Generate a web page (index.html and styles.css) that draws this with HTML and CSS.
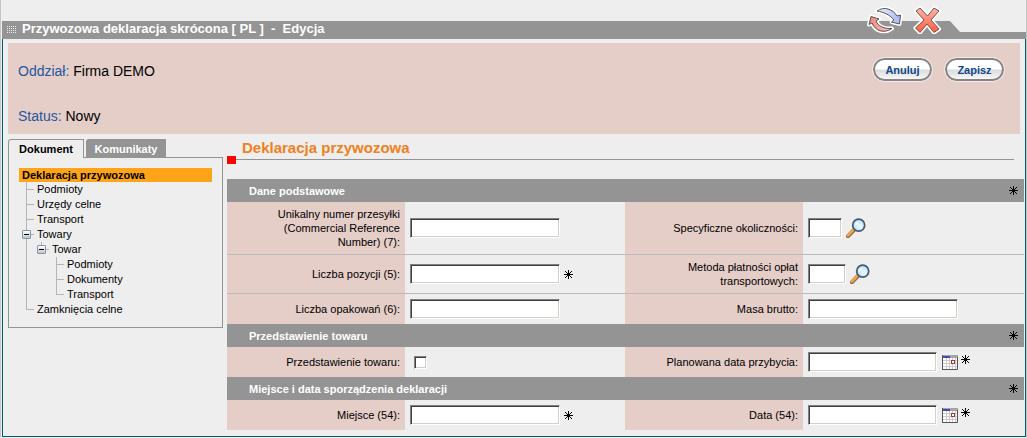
FILE: index.html
```html
<!DOCTYPE html>
<html lang="pl">
<head>
<meta charset="utf-8">
<title>Przywozowa deklaracja skrócona</title>
<link rel="stylesheet" href="styles.css">
</head>
<body>
<svg class="defs" width="0" height="0" aria-hidden="true">
  <symbol id="star" viewBox="0 0 9 9"><path d="M4.5 0v9M0 4.5h9M1 1l7 7M8 1l-7 7" stroke="#000" stroke-width="1" fill="none"/><rect x="3" y="3" width="3" height="3"/></symbol>
  <symbol id="lens" viewBox="0 0 20 20"><path d="M2 18.2 8 12" stroke="#8b6a4a" stroke-width="4" stroke-linecap="round"/><path d="M1.8 17.6 7.4 11.8" stroke="#f7a640" stroke-width="2.4" stroke-linecap="round"/><circle cx="12.7" cy="7.2" r="6" fill="#c4e8fb" stroke="#46586c" stroke-width="1.7"/><path d="M9 8a4 4 0 0 1 4-4.300c-1 1.500-2 3.500-4 4.300z" fill="#fff"/><circle cx="14" cy="8.500" r="3" fill="#e2f5ff"/></symbol>
  <symbol id="cal" viewBox="0 0 16 15"><rect width="16" height="15" fill="#fff"/><path d="M.5 3v12M4.500 3v12M7.500 3v12M10.500 3v12M13.500 3v12M0 5.500h16M0 8.500h16M0 11.500h16" stroke="#ccc" fill="none"/><path d="M0 0h16v3H0z" fill="#a5a5a5"/><path d="M1 1h7v2H1z" fill="#4848b0"/><path d="M0 14.500h15.500V2M.5 0v15" stroke="#555" fill="none"/><rect x="9.500" y="5.500" width="3" height="3" fill="#fff" stroke="#a33"/></symbol>
</svg>
<div class="window">
  <header class="titlebar">
    <div class="titlebar-main">
      <h1 class="title"><span class="grip"></span>Przywozowa deklaracja skrócona [ PL ] &nbsp;-&nbsp; Edycja</h1>
      <button class="icon-btn" type="button" aria-label="Odśwież">
        <svg width="36" height="30" viewBox="0 0 36 30">
          <defs>
            <linearGradient id="blue"><stop offset="0" stop-color="#f2f4ff"/><stop offset="1" stop-color="#a9b6f2"/></linearGradient>
            <linearGradient id="red" x1="0" y1="0" x2="1" y2="0"><stop offset="0" stop-color="#f4857e"/><stop offset="1" stop-color="#fbc4c0"/></linearGradient>
          </defs>
          <g stroke="#fff" stroke-width="4" stroke-linejoin="round" fill="#fff"><path d="M10 6C17 1 26 4 30 11l3.500-1-1 9-8-2 2.500-2C23 10 17 7 10 6z"/><path d="M4 11.500l8 2.500-3 2c2 5 8 8 16 7.500C17 29 8 26 5 18l-3 1.500z"/></g>
          <path d="M10 6C17 1 26 4 30 11l3.500-1-1 9-8-2 2.500-2C23 10 17 7 10 6z" fill="url(#blue)" stroke="#555" stroke-width="1"/>
          <path d="M4 11.500l8 2.500-3 2c2 5 8 8 16 7.500C17 29 8 26 5 18l-3 1.500z" fill="url(#red)" stroke="#555" stroke-width="1"/>
        </svg>
      </button>
      <button class="icon-btn" type="button" aria-label="Zamknij">
        <svg width="29" height="28" viewBox="0 0 29 28">
          <defs><linearGradient id="cross" x1="0" y1="0" x2="0" y2="1"><stop offset="0" stop-color="#f9b6a8"/><stop offset="1" stop-color="#ff5a40"/></linearGradient></defs>
          <path d="M3 5l4-3 7.500 8L21 2l5 3-8 9 8 9-5 3.500-7-8.500-7 8.500L2.500 22 11 14z" fill="#fff" stroke="#fff" stroke-width="4" stroke-linejoin="round"/>
          <path d="M3 5l4-3 7.500 8L21 2l5 3-8 9 8 9-5 3.500-7-8.500-7 8.500L2.500 22 11 14z" fill="url(#cross)" stroke="#75504a" stroke-width="1"/>
        </svg>
      </button>
    </div>
    <div class="titlebar-end"></div>
  </header>
  <div class="frame">
    <section class="summary">
      <div class="facts">
        <p class="fact"><span class="fact-name">Oddział:</span> Firma DEMO</p>
        <p class="fact"><span class="fact-name">Status:</span> Nowy</p>
      </div>
      <div class="actions">
        <button class="pill" type="button">Anuluj</button>
        <button class="pill" type="button">Zapisz</button>
      </div>
    </section>
    <div class="columns">
      <nav class="side">
        <div class="tabs">
          <button class="tab tab-on" type="button">Dokument</button>
          <button class="tab" type="button">Komunikaty</button>
        </div>
        <div class="tree-box">
          <a class="root" href="#">Deklaracja przywozowa</a>
          <ul class="tree">
            <li><a href="#">Podmioty</a></li>
            <li><a href="#">Urzędy celne</a></li>
            <li><a href="#">Transport</a></li>
            <li><button class="toggle" type="button" aria-label="Zwiń"></button><a href="#">Towary</a>
              <ul class="tree">
                <li><button class="toggle" type="button" aria-label="Zwiń"></button><a href="#">Towar</a>
                  <ul class="tree">
                    <li><a href="#">Podmioty</a></li>
                    <li><a href="#">Dokumenty</a></li>
                    <li><a href="#">Transport</a></li>
                  </ul>
                </li>
              </ul>
            </li>
            <li><a href="#">Zamknięcia celne</a></li>
          </ul>
        </div>
      </nav>
      <main class="main">
        <div class="heading"><h2>Deklaracja przywozowa</h2><div class="rule"></div></div>
        <form>
          <div class="band"><h3>Dane podstawowe</h3><svg class="star"><use href="#star"/></svg></div>
          <div class="row row-tall">
            <label class="name" for="f1"><span>Unikalny numer przesyłki (Commercial Reference Number) (7):</span></label>
            <div class="value"><input class="box" id="f1" type="text"></div>
            <label class="name" for="f2"><span>Specyficzne okoliczności:</span></label>
            <div class="value"><input class="box box-xs" id="f2" type="text"><button class="icon-btn" type="button" aria-label="Szukaj"><svg class="lens"><use href="#lens"/></svg></button></div>
          </div>
          <div class="row row-mid">
            <label class="name" for="f3"><span>Liczba pozycji (5):</span></label>
            <div class="value"><input class="box" id="f3" type="text"><svg class="star"><use href="#star"/></svg></div>
            <label class="name" for="f4"><span>Metoda płatności opłat transportowych:</span></label>
            <div class="value"><input class="box box-s" id="f4" type="text"><button class="icon-btn" type="button" aria-label="Szukaj"><svg class="lens"><use href="#lens"/></svg></button></div>
          </div>
          <div class="row">
            <label class="name" for="f5"><span>Liczba opakowań (6):</span></label>
            <div class="value"><input class="box" id="f5" type="text"></div>
            <label class="name" for="f6"><span>Masa brutto:</span></label>
            <div class="value"><input class="box" id="f6" type="text"></div>
          </div>
          <div class="band"><h3>Przedstawienie towaru</h3><svg class="star"><use href="#star"/></svg></div>
          <div class="row">
            <label class="name" for="f7"><span>Przedstawienie towaru:</span></label>
            <div class="value"><input class="check" id="f7" type="checkbox"></div>
            <label class="name" for="f8"><span>Planowana data przybycia:</span></label>
            <div class="value"><input class="box box-date" id="f8" type="text"><span class="date-tools"><button class="icon-btn" type="button" aria-label="Kalendarz"><svg class="cal"><use href="#cal"/></svg></button><svg class="star"><use href="#star"/></svg></span></div>
          </div>
          <div class="band"><h3>Miejsce i data sporządzenia deklaracji</h3><svg class="star"><use href="#star"/></svg></div>
          <div class="row">
            <label class="name" for="f9"><span>Miejsce (54):</span></label>
            <div class="value"><input class="box" id="f9" type="text"><svg class="star"><use href="#star"/></svg></div>
            <label class="name" for="f10"><span>Data (54):</span></label>
            <div class="value"><input class="box box-date" id="f10" type="text"><span class="date-tools"><button class="icon-btn" type="button" aria-label="Kalendarz"><svg class="cal"><use href="#cal"/></svg></button><svg class="star"><use href="#star"/></svg></span></div>
          </div>
        </form>
      </main>
    </div>
  </div>
</div>
</body>
</html>
```

FILE: styles.css
```css
* { box-sizing: border-box; }
body {
  margin: 0;
  background: #eee;
  color: #000;
  font: 11px/14px "Liberation Sans", Arial, sans-serif;
}
h1, h2, h3, p, ul { margin: 0; padding: 0; }
ul { list-style: none; }
a { color: inherit; text-decoration: none; }
svg { display: block; }
.defs { position: absolute; }
.window { border-left: 1px solid #c6c6c6; border-right: 1px solid #c6c6c6; padding-left: 1px; }

.titlebar { display: flex; align-items: flex-end; }
.titlebar-main {
  flex: 1;
  display: flex;
  align-items: center;
  gap: 10px;
  height: 39px;
  padding: 0 8px 0 4px;
  background: linear-gradient(#949494, #949494) 0 21px / 100% 18px no-repeat;
}
.title {
  flex: 1;
  display: flex;
  align-items: center;
  align-self: flex-end;
  gap: 6px;
  padding-bottom: 2px;
  color: #fff;
  font-size: 13px;
  line-height: 16px;
}
.grip {
  width: 10px;
  height: 8px;
  margin-top: 2px;
  background: conic-gradient(#e4eef4 25%, transparent 0) 0 0 / 2px 2px;
}
.titlebar-end {
  width: 76px;
  height: 18px;
  background: #949494;
  clip-path: polygon(0 0, 10px 11px, 100% 11px, 100% 100%, 0 100%);
}
.icon-btn { padding: 0; border: 0; background: none; line-height: 0; }

.frame { border: solid #00606a; border-width: 0 1px 1px; padding: 4px 1px 6px 5px; }
.summary {
  display: flex;
  justify-content: space-between;
  margin-right: 4px;
  padding: 15px 16px 7px 10px;
  background: #e5cdc8;
}
.facts { display: flex; flex-direction: column; gap: 23px; padding-top: 2px; }
.fact { font-size: 14px; line-height: 22px; }
.fact-name { color: #2458a0; }
.actions { display: flex; align-items: flex-start; gap: 13px; }
.pill {
  width: 59px;
  height: 23px;
  padding: 0;
  border: 2px solid #858585;
  border-radius: 12px;
  outline: 1px solid #f4ebe9;
  background: linear-gradient(#fff 0 45%, #dcdcdc 55%, #f8f8f8);
  color: #10488c;
  font: bold 11px/14px "Liberation Sans", Arial, sans-serif;
}

.columns { display: flex; gap: 4px; align-items: flex-start; }
.side { width: 215px; padding-top: 5px; }
.tabs { display: flex; gap: 2px; }
.tab {
  width: 80px;
  height: 18px;
  padding: 2px 0 0;
  border: 0;
  border-radius: 3px 0 0 0;
  background: #949494;
  color: #fff;
  font: bold 11px/14px "Liberation Sans", Arial, sans-serif;
}
.tab-on {
  width: 76px;
  height: 19px;
  margin-bottom: -1px;
  padding-top: 0;
  border: solid #949494;
  border-width: 1px 1px 0;
  background: #eee;
  color: #000;
  z-index: 1;
}
.tree-box { border: 1px solid #949494; padding: 10px 10px 10px; }
.root {
  display: block;
  padding-left: 3px;
  background: #ffa319;
  font-weight: bold;
}
.tree { margin-left: 7px; }
.tree .tree { margin-left: 4px; }
.tree li {
  padding-left: 11px;
  line-height: 15px;
  background:
    linear-gradient(#b5b5b5, #b5b5b5) 0 0 / 1px 100% no-repeat,
    linear-gradient(#b5b5b5, #b5b5b5) 0 7px / 8px 1px no-repeat;
}
.tree li:last-child { background-size: 1px 8px, 8px 1px; }
.toggle {
  float: left;
  width: 9px;
  height: 9px;
  margin: 3px 6px 0 -15px;
  padding: 0;
  border: 1px solid #7898b5;
  border-radius: 1px;
  background: linear-gradient(#000, #000) center / 5px 1px no-repeat, linear-gradient(#fff, #c8c4bc);
}

.main { flex: 1; }
.heading { margin-bottom: 15px; padding-top: 5px; }
.heading h2 {
  padding-left: 15px;
  color: #f08020;
  font-size: 15px;
  line-height: 17px;
}
.rule {
  height: 8px;
  margin-right: 10px;
  background:
    linear-gradient(#f00, #f00) 0 0 / 9px 8px no-repeat,
    linear-gradient(#949494, #949494) 0 3px / 100% 1px no-repeat;
}
.band {
  display: flex;
  align-items: center;
  justify-content: space-between;
  height: 23px;
  padding: 0 6px 0 22px;
  background: #949494;
  color: #fff;
}
.band h3 { font-size: 11px; line-height: 14px; }
.star { flex: none; width: 9px; height: 9px; }
.row {
  display: grid;
  grid-template-columns: 178fr 220fr 178fr 221fr;
  min-height: 30px;
}
.row-tall { min-height: 53px; border-bottom: 1px solid #bbb; }
.row-mid { min-height: 39px; border-bottom: 1px solid #bbb; }
.name {
  display: flex;
  align-items: center;
  justify-content: flex-end;
  padding: 0 5px 0 30px;
  background: #e5cdc8;
  text-align: right;
}
.value { display: flex; align-items: center; gap: 4px; padding-left: 5px; }
.box {
  width: 150px;
  height: 20px;
  padding: 1px 3px;
  border: 1px solid;
  border-color: #808080 #fff #fff #808080;
  box-shadow: inset 1px 1px #404040, inset -1px -1px #d4d0c8;
  background: #fff;
  font: 11px/14px "Liberation Sans", Arial, sans-serif;
}
.box-xs { width: 34px; }
.box-s { width: 38px; }
.box-date { width: 129px; }
.check {
  appearance: none;
  width: 13px;
  height: 13px;
  margin: 0 0 0 4px;
  border: 1px solid;
  border-color: #808080 #fff #fff #808080;
  box-shadow: inset 1px 1px #404040, inset -1px -1px #d4d0c8;
  background: #fff;
}
.lens { width: 20px; height: 20px; }
.cal { width: 16px; height: 15px; }
.date-tools { display: flex; align-items: flex-start; gap: 3px; padding-left: 1px; }
```
